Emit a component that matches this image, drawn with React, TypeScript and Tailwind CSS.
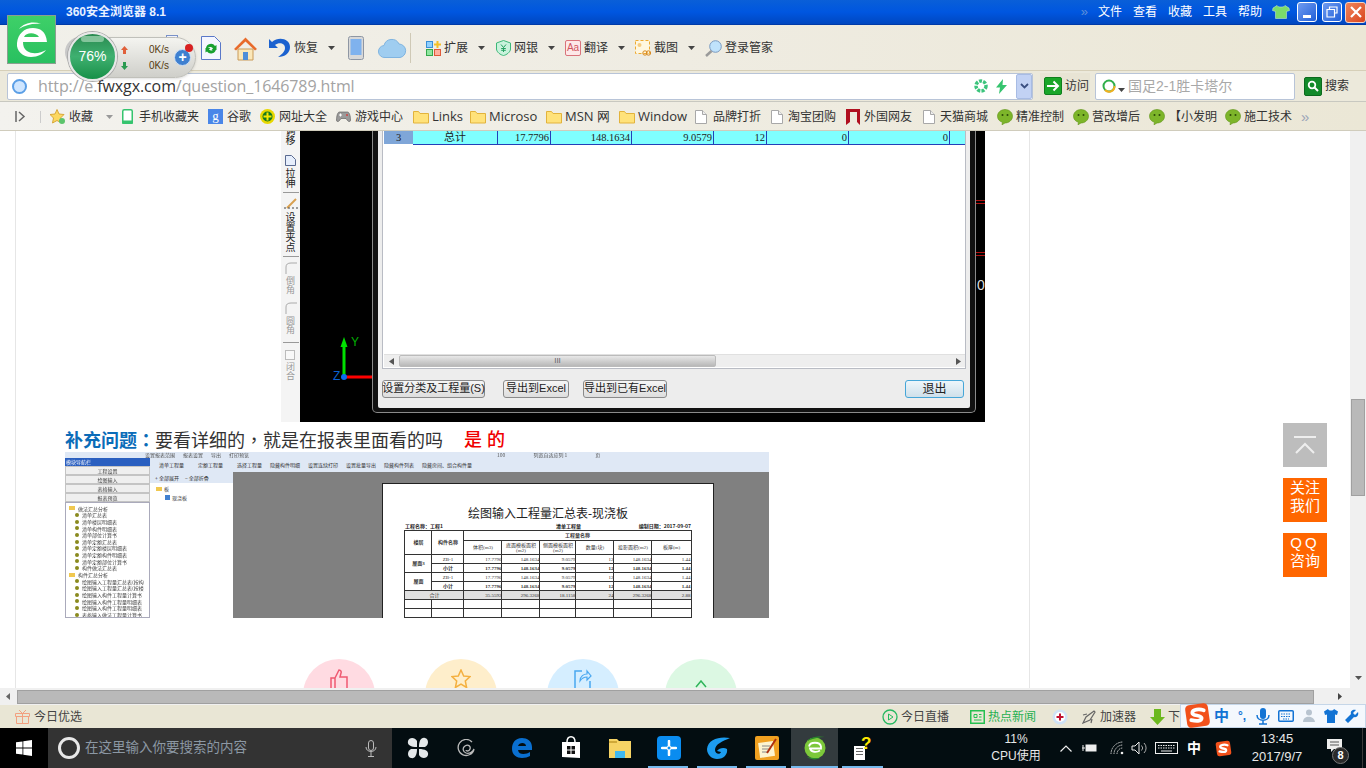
import React from "react";

const Caret = () => (
  <svg width="7" height="4" viewBox="0 0 7 4" className="shrink-0">
    <path d="M0 0h7L3.5 4z" fill="#444" />
  </svg>
);

const Folder = () => (
  <svg width="16" height="14" viewBox="0 0 16 14" className="shrink-0">
    <path d="M.5 13V1.5h5l1.5 2h8.500V13z" fill="#ffe27a" stroke="#e2b33c" />
  </svg>
);

const Doc = () => (
  <svg width="12" height="14" viewBox="0 0 12 14" className="shrink-0">
    <path d="M.5.5h7l4 4v9H.5z" fill="#fff" stroke="#a8a8a8" />
    <path d="M7.5.5v4h4" fill="#eee" stroke="#a8a8a8" />
  </svg>
);

const WeChat = () => (
  <svg width="16" height="16" viewBox="0 0 16 16" className="shrink-0">
    <path d="M8 .5c4 0 7.500 2.800 7.500 6.700S12 14 8 14l-3 1.800.4-2.500C2.300 12.300.5 10 .5 7.200.5 3.300 4 .5 8 .5z" fill="#7db52a" stroke="#5f9418" strokeWidth=".6" />
    <circle cx="5.500" cy="6" r="1" fill="#2c4a08" />
    <circle cx="10.500" cy="6" r="1" fill="#2c4a08" />
  </svg>
);

const ToolItem = ({ icon, label, caret, w }: { icon: React.ReactNode; label?: string; caret?: boolean; w: number }) => (
  <div className="flex items-center shrink-0 gap-[3px]" style={{ width: w }}>
    {icon}
    {label && <span className="text-[12px] text-[#333] whitespace-nowrap">{label}</span>}
    {caret && <span className="ml-[7px]"><Caret /></span>}
  </div>
);

const TitleBar = () => (
  <div className="h-[25px] shrink-0 flex items-center bg-gradient-to-b from-[#0a5fd8] via-[#0056e0] to-[#0047c0] border-b border-[#003aa8]">
    <span className="ml-[66px] text-[12px] font-bold text-[#e8f0ff]">360安全浏览器 8.1</span>
    <div className="ml-auto flex items-center text-white text-[12px]">
      <span className="text-[#5f8fd8] text-[13px] mr-[10px]">»</span>
      <div className="flex gap-[11px]">
        <span>文件</span>
        <span>查看</span>
        <span>收藏</span>
        <span>工具</span>
        <span>帮助</span>
      </div>
      <svg width="18" height="14" viewBox="0 0 18 14" className="ml-[10px] mr-[7px]">
        <path d="M5 .5 1 3l-.5 2.500 3 1V13.500h11V6.500l3-1L17 3 13 .5c-1 2-7 2-8 0z" fill="#7bdc6a" stroke="#d8f5d0" strokeWidth=".5" />
      </svg>
      <div className="w-[20px] h-[20px] rounded-[3px] border border-white bg-gradient-to-br from-[#6f9bf0] to-[#1f5fd8] flex items-end justify-center pb-[3px]">
        <div className="w-[8px] h-[3px] bg-white" />
      </div>
      <div className="w-[20px] h-[20px] ml-[5px] rounded-[3px] border border-white bg-gradient-to-br from-[#6f9bf0] to-[#1f5fd8] flex items-center justify-center">
        <svg width="12" height="12" viewBox="0 0 12 12">
          <path d="M3.500 3.500V1h7.500v6H8.500M1 3.500h7.500v7.500H1z" fill="none" stroke="#fff" strokeWidth="1.200" />
        </svg>
      </div>
      <div className="w-[21px] h-[21px] ml-[3px] rounded-[3px] border border-[#f6d5c6] bg-gradient-to-br from-[#f0845a] to-[#d9431a] flex items-center justify-center">
        <svg width="12" height="12" viewBox="0 0 12 12">
          <path d="M1 1l10 10M11 1 1 11" stroke="#fff" strokeWidth="2.200" />
        </svg>
      </div>
    </div>
  </div>
);

const Toolbar = () => (
  <div className="h-[46px] shrink-0 flex items-center pl-[201px] pt-[1px] bg-gradient-to-r from-[#f1f0ea] via-[#efece2] to-[#ebe7d6] border-b border-[#d6cfb8]">
    <div className="w-[32px] shrink-0">
      <svg width="20" height="24" viewBox="0 0 20 24">
        <path d="M.5.500h13l6 6V23.500H.5z" fill="#f4f6ff" stroke="#5a78c8" />
        <path d="M5 12a5 5 0 0 1 9-2l1.500-1v5h-5l1.500-1.500A3 3 0 0 0 7 12zM15 13a5 5 0 0 1-9 2.500l-1.500 1v-4.500h5L8 13.500A3 3 0 0 0 13 13z" fill="#18a030" />
      </svg>
    </div>
    <div className="w-[35px] shrink-0">
      <svg width="25" height="25" viewBox="0 0 25 25">
        <path d="M5 13v11h15V13z" fill="#fbe7b8" stroke="#c99a58" />
        <path d="M1 13 12.500 1.500 24 13l-2 1.500-9.500-9-9.500 9z" fill="#e86b2b" />
        <rect x="10" y="16" width="5" height="8" fill="#4f8ed8" />
      </svg>
    </div>
    <ToolItem
      w={80}
      label="恢复"
      caret
      icon={
        <svg width="23" height="24" viewBox="0 0 23 24" className="shrink-0">
          <path d="M1 3v9h9L7 9c4-3 10-2 10 3 0 4-4 7-7 9 7 0 12-4 12-10C22 3 11 0 4 6z" fill="#1c62cf" />
        </svg>
      }
    />
    <div className="w-[30px] shrink-0">
      <svg width="16" height="24" viewBox="0 0 16 24">
        <rect x=".5" y=".5" width="15" height="23" rx="2" fill="#d8d8d8" stroke="#8e96a3" />
        <rect x="2.500" y="3" width="11" height="16" fill="#7fb2ee" />
      </svg>
    </div>
    <div className="w-[32px] shrink-0">
      <svg width="29" height="20" viewBox="0 0 29 20">
        <path d="M7 19.500a6 6 0 0 1-1-12A8 8 0 0 1 21 6a6.800 6.800 0 0 1 1 13.500z" fill="#9fcdf0" stroke="#7fb4e0" />
      </svg>
    </div>
    <div className="w-px h-[30px] bg-[#cfc9b6] mr-[15px] shrink-0" />
    <ToolItem
      w={70}
      label="扩展"
      caret
      icon={
        <svg width="15" height="15" viewBox="0 0 15 15" className="shrink-0">
          <rect x=".5" y=".5" width="6" height="6" fill="#8fd0ff" stroke="#3a8fd8" />
          <rect x=".5" y="8.500" width="6" height="6" fill="#8fe6a0" stroke="#35a84c" />
          <rect x="8.500" y="8.500" width="6" height="6" fill="#ffb0a0" stroke="#e05a3a" />
          <path d="M10.500 0h2v2.500H15v2h-2.500V7h-2V4.500H8v-2h2.500z" fill="#f6c026" />
        </svg>
      }
    />
    <ToolItem
      w={69}
      label="网银"
      caret
      icon={
        <svg width="15" height="16" viewBox="0 0 15 16" className="shrink-0">
          <path d="M7.500.5 14.500 3v6c0 3-4 6-7 6.500C4.500 15 .5 12 .5 9V3z" fill="#c9f2dc" stroke="#3cb878" />
          <path d="M5 4.500l2.500 3 2.500-3M7.500 7.500V12M5.200 8.500h4.600M5.200 10.300h4.600" fill="none" stroke="#25a060" />
        </svg>
      }
    />
    <ToolItem
      w={70}
      label="翻译"
      caret
      icon={
        <div className="w-[16px] h-[16px] border border-[#d9737b] bg-[#fde8e8] rounded-[2px] text-[#d0565f] text-[10px] leading-[14px] text-center">Aa</div>
      }
    />
    <ToolItem
      w={70}
      label="截图"
      caret
      icon={
        <svg width="16" height="16" viewBox="0 0 16 16" className="shrink-0">
          <rect x=".5" y=".5" width="14" height="13" fill="#fff7e0" stroke="#eeaa30" strokeDasharray="3 2" />
          <circle cx="4.500" cy="5" r="2" fill="#f6cc80" />
          <circle cx="10" cy="13" r="2.200" fill="none" stroke="#d98a20" />
          <circle cx="13.500" cy="13" r="2.200" fill="none" stroke="#d98a20" />
        </svg>
      }
    />
    <ToolItem
      w={80}
      label="登录管家"
      icon={
        <svg width="17" height="17" viewBox="0 0 17 17" className="shrink-0">
          <circle cx="10.500" cy="6.500" r="5.800" fill="#bfe2fb" stroke="#7a9ac0" />
          <path d="M6.500 11 1 16" stroke="#9a9a9a" strokeWidth="2.500" />
        </svg>
      }
    />
  </div>
);

const AddressBar = () => (
  <div className="h-[31px] shrink-0 flex items-center pl-[7px] bg-[#ece9db] border-b border-[#c8c8c0]">
    <div className="w-[1026px] h-[27px] shrink-0 flex items-center bg-white border border-[#b8c4d8] rounded-[2px] pl-[4px]">
      <div className="w-[15px] h-[15px] rounded-full bg-[#cfe6ff] border-[2px] border-[#5b9fe6] shrink-0" />
      <span className="ml-[11px] text-[16px] text-[#a3a3a3] tracking-[-0.1px] [font-family:'Open_Sans',sans-serif] whitespace-nowrap">
        http://e.<span className="text-[#333]">fwxgx.com</span>/question_1646789.html
      </span>
      <div className="ml-auto flex items-center">
        <svg width="14" height="14" viewBox="0 0 14 14" className="mr-[8px]">
          <circle cx="7" cy="7" r="5" fill="none" stroke="#3cc47c" strokeWidth="3.500" strokeDasharray="3 1.200" />
        </svg>
        <svg width="11" height="15" viewBox="0 0 11 15" className="mr-[9px]">
          <path d="M7 0 0 8.500h4L3 15l8-9H6.500z" fill="#35c46e" />
        </svg>
        <div className="w-[16px] h-[25px] bg-[#c2d2f4] border border-[#a8bce4] rounded-[2px] flex items-center justify-center">
          <svg width="9" height="6" viewBox="0 0 9 6">
            <path d="M1 1l3.500 3.500L8 1" fill="none" stroke="#3a4f80" strokeWidth="1.800" />
          </svg>
        </div>
      </div>
    </div>
    <div className="w-[50px] h-[27px] ml-[7px] shrink-0 flex items-center gap-[3px] pl-[4px] bg-[#e8e4d4]">
      <div className="w-[18px] h-[18px] shrink-0 bg-[#1aa628] border border-[#0f7f1c] rounded-[2px] flex items-center justify-center">
        <svg width="13" height="12" viewBox="0 0 13 12">
          <path d="M0 6h10M6.500 1.500 11 6l-4.500 4.500" fill="none" stroke="#fff" strokeWidth="2" />
        </svg>
      </div>
      <span className="text-[12px] text-[#333] whitespace-nowrap">访问</span>
    </div>
    <div className="w-[200px] h-[27px] ml-[5px] shrink-0 flex items-center bg-white border border-[#b8c4d8] rounded-[2px] pl-[6px]">
      <svg width="15" height="15" viewBox="0 0 15 15" className="shrink-0">
        <circle cx="7" cy="7" r="5.500" fill="none" stroke="#2fae4a" strokeWidth="2" />
        <path d="M12.500 7A5.500 5.500 0 0 1 3 11" fill="none" stroke="#f2b01e" strokeWidth="2" />
      </svg>
      <span className="ml-[1px] mt-[7px]"><Caret /></span>
      <span className="ml-[3px] text-[14px] text-[#a8a8a8] whitespace-nowrap">国足2-1胜卡塔尔</span>
    </div>
    <div className="ml-[9px] shrink-0 flex items-center gap-[3px]">
      <div className="w-[18px] h-[19px] bg-[#138a2a] border border-[#0c6a1e] rounded-[2px] flex items-center justify-center">
        <svg width="12" height="12" viewBox="0 0 12 12">
          <circle cx="5" cy="5" r="3.300" fill="none" stroke="#fff" strokeWidth="1.800" />
          <path d="M7.500 7.500 11 11" stroke="#fff" strokeWidth="2" />
        </svg>
      </div>
      <span className="text-[12px] text-[#333]">搜索</span>
    </div>
  </div>
);

const Bm = ({ icon, label, w, gap = 4, latin }: { icon: React.ReactNode; label: string; w: number; gap?: number; latin?: boolean }) => (
  <div className="flex items-center shrink-0" style={{ width: w, gap }}>
    {icon}
    <span className={latin ? "text-[13px] text-[#333] whitespace-nowrap [font-family:'Open_Sans',sans-serif]" : "text-[12px] text-[#333] whitespace-nowrap"}>{label}</span>
  </div>
);

const BookmarkBar = () => (
  <div className="h-[29px] shrink-0 flex items-center pl-[15px] pt-[1px] bg-gradient-to-r from-[#f3f2ee] to-[#ebe7d6] border-b border-[#d0ccbc]">
    <svg width="12" height="11" viewBox="0 0 12 11" className="shrink-0">
      <path d="M1 0v11M4 1l5 4.500L4 10" fill="none" stroke="#666" strokeWidth="1.500" />
    </svg>
    <div className="w-px h-[12px] bg-[#ccc] ml-[13px] mr-[9px] shrink-0" />
    <div className="w-[72px] shrink-0 flex items-center gap-[4px]">
      <svg width="15" height="15" viewBox="0 0 15 15" className="shrink-0">
        <path d="M7 .5 9 5l5 .5-3.500 3.500 1 5L7 11.500 2.500 14l1-5L0 5.500 5 5z" fill="#fcd860" stroke="#d8a838" />
        <circle cx="12" cy="12" r="3" fill="#5cc46c" />
      </svg>
      <span className="text-[12px] text-[#333]">收藏</span>
      <span className="ml-[9px]"><svg width="7" height="4" viewBox="0 0 7 4"><path d="M0 0h7L3.500 4z" fill="#999" /></svg></span>
    </div>
    <Bm
      w={86}
      gap={6}
      label="手机收藏夹"
      icon={
        <svg width="11" height="15" viewBox="0 0 11 15" className="shrink-0">
          <rect x=".75" y=".75" width="9.500" height="13.500" rx="1.500" fill="#fff" stroke="#35c46e" strokeWidth="1.500" />
          <rect x="0" y="11.500" width="11" height="3.500" rx="1" fill="#35c46e" />
        </svg>
      }
    />
    <Bm
      w={52}
      label="谷歌"
      icon={<div className="w-[15px] h-[15px] shrink-0 bg-[#4a86e8] text-white text-[13px] leading-[13px] text-center [font-family:'Liberation_Serif',serif]">g</div>}
    />
    <Bm
      w={76}
      label="网址大全"
      icon={
        <svg width="15" height="15" viewBox="0 0 15 15" className="shrink-0">
          <circle cx="7.500" cy="7.500" r="7.500" fill="#e8d800" />
          <circle cx="7.500" cy="7.500" r="5" fill="#157a1e" />
          <path d="M6.500 3.500h2v3h3v2h-3v3h-2v-3h-3v-2h3z" fill="#f6e800" />
        </svg>
      }
    />
    <Bm
      w={77}
      label="游戏中心"
      icon={
        <svg width="15" height="11" viewBox="0 0 15 11" className="shrink-0">
          <path d="M3.500 1h8c2 0 3 4.500 3 8 0 2-2 2-3 .5L10 7.500H5L3.500 9.500c-1 1.500-3 1.500-3-.5 0-3.500 1-8 3-8z" fill="#9a9a9a" stroke="#555" strokeWidth=".6" />
          <circle cx="11" cy="4" r="1" fill="#d04040" />
          <path d="M3 4h3M4.500 2.500v3" stroke="#fff" />
        </svg>
      }
    />
    <Bm w={57} gap={3} latin label="Links" icon={<Folder />} />
    <Bm w={76} gap={3} latin label="Microso" icon={<Folder />} />
    <Bm w={73} gap={3} latin label="MSN 网" icon={<Folder />} />
    <Bm w={76} gap={3} latin label="Window" icon={<Folder />} />
    <Bm w={76} gap={6} label="品牌打折" icon={<Doc />} />
    <Bm w={75} gap={5} label="淘宝团购" icon={<Doc />} />
    <Bm
      w={77}
      label="外国网友"
      icon={
        <svg width="14" height="16" viewBox="0 0 14 16" className="shrink-0">
          <path d="M0 0h14v16l-3-3V3H4v10l-4 3z" fill="#b01020" />
        </svg>
      }
    />
    <Bm w={74} gap={5} label="天猫商城" icon={<Doc />} />
    <Bm w={76} gap={3} label="精准控制" icon={<WeChat />} />
    <Bm w={76} gap={3} label="营改增后" icon={<WeChat />} />
    <Bm w={76} gap={4} label="【小发明" icon={<WeChat />} />
    <Bm w={76} gap={3} label="施工技术" icon={<WeChat />} />
    <span className="text-[#9aa4b8] text-[15px] leading-none">»</span>
  </div>
);

const CadTool = ({ text, dim, icon }: { text: string[]; dim?: boolean; icon?: React.ReactNode }) => (
  <div className="flex flex-col items-center">
    {icon}
    <div className={dim ? "flex flex-col items-center text-[#999] text-[9px] leading-[9px] mt-[3px]" : "flex flex-col items-center text-[#222] text-[10px] leading-[10px] mt-[3px]"}>
      {text.map((t) => (
        <span key={t}>{t}</span>
      ))}
    </div>
  </div>
);

const CornerIcon = () => (
  <svg width="12" height="12" viewBox="0 0 12 12">
    <path d="M1 12V5Q1 1 6 1h6" fill="none" stroke="#aaa" />
  </svg>
);

const Divider = () => <div className="w-[16px] h-px shrink-0 bg-[#999] mt-[3px] mb-[5px]" />;

const colEdges = [85, 53, 81, 82, 53, 82, 101];
const totals = ["总计", "17.7796", "148.1634", "9.0579", "12", "0", "0"];

const CadDialog = () => (
  <div className="absolute left-[72px] top-[-6px] w-[604px] h-[288px] bg-[#111] border border-t-0 border-[#8a8a8a] rounded-b-[5px] px-[5px] pb-[4px]">
    <div className="h-full bg-[#ededed] flex flex-col px-[4px] rounded-b-[2px]">
      <div className="h-[244px] shrink-0 bg-white border border-[#b9bcc4] flex flex-col pl-[1px] pt-[5px]">
        <div className="h-[14px] flex shrink-0 [font-family:'Liberation_Serif','Noto_Sans_CJK_SC',serif] text-[10.500px] leading-[13px] text-[#222]">
          <div className="w-[29px] h-[13px] bg-[#7fa6d8] text-center shrink-0">3</div>
          <div className="flex flex-1 bg-[#7fffff] border-b-[1.500px] border-[#2440b8]">
            {totals.map((t, i) => (
              <div
                key={t + i}
                style={{ width: colEdges[i] }}
                className={i === 0 ? "text-center border-r border-[#2440b8] shrink-0 text-[11px]" : "text-right pr-[1px] border-r border-[#2440b8] shrink-0"}
              >
                {t}
              </div>
            ))}
          </div>
        </div>
        <div className="flex-1" />
        <div className="h-[13px] shrink-0 bg-[#eeeeee] flex items-center border-t border-[#e0e0e0] mb-[1px]">
          <svg width="5" height="7" viewBox="0 0 5 7" className="ml-[5px]">
            <path d="M5 0v7L0 3.500z" fill="#555" />
          </svg>
          <div className="ml-[5px] w-[317px] h-[12px] bg-gradient-to-b from-[#e8e8e8] to-[#b8b8b8] border border-[#bbb] rounded-[2px] flex items-center justify-center text-[8px] leading-none text-[#666]">III</div>
          <svg width="5" height="7" viewBox="0 0 5 7" className="ml-auto mr-[4px]">
            <path d="M0 0v7l5-3.500z" fill="#555" />
          </svg>
        </div>
      </div>
      <div className="flex items-center flex-1 text-[11px] text-[#222]">
        <div className="w-[103px] h-[18px] flex items-center justify-center bg-gradient-to-b from-[#f6f6f6] to-[#dedede] border border-[#8a8a8a] rounded-[3px] whitespace-nowrap">设置分类及工程量(S)</div>
        <div className="w-[66px] h-[18px] ml-[18px] flex items-center justify-center bg-gradient-to-b from-[#f6f6f6] to-[#dedede] border border-[#8a8a8a] rounded-[3px] whitespace-nowrap">导出到Excel</div>
        <div className="w-[84px] h-[18px] ml-[14px] flex items-center justify-center bg-gradient-to-b from-[#f6f6f6] to-[#dedede] border border-[#8a8a8a] rounded-[3px] whitespace-nowrap">导出到已有Excel</div>
        <div className="w-[59px] h-[18px] ml-auto mr-[2px] flex items-center justify-center bg-gradient-to-b from-[#eef6fb] to-[#cfe0ea] border-[1.500px] border-[#46a6d8] rounded-[3px] text-[12px]">退出</div>
      </div>
    </div>
  </div>
);

const CadShot = () => (
  <div className="ml-[265px] w-[704px] h-[291px] shrink-0 flex overflow-hidden">
    <div className="w-[19px] shrink-0 bg-[#f4f4f4] flex flex-col items-center">
      <div className="-mt-[8px] shrink-0">
        <CadTool text={["调", "移"]} />
      </div>
      <div className="h-[9px] shrink-0" />
      <CadTool
        text={["拉", "伸"]}
        icon={
          <svg width="11" height="11" viewBox="0 0 11 11">
            <path d="M.5.500h6l4 4v6H.5z" fill="#e6eefc" stroke="#5a6a90" />
          </svg>
        }
      />
      <Divider />
      <CadTool
        text={["设", "置", "夹", "点"]}
        icon={
          <svg width="14" height="12" viewBox="0 0 14 12">
            <path d="M3 10 12 1" stroke="#d8a050" strokeWidth="2" />
            <path d="M0 10h14" stroke="#444" strokeDasharray="2 2" />
          </svg>
        }
      />
      <Divider />
      <CadTool dim text={["倒", "角"]} icon={<CornerIcon />} />
      <div className="h-[7px] shrink-0" />
      <CadTool dim text={["圆", "角"]} icon={<CornerIcon />} />
      <div className="h-[4px] shrink-0" />
      <Divider />
      <CadTool
        dim
        text={["闭", "合"]}
        icon={
          <svg width="12" height="12" viewBox="0 0 12 12">
            <rect x=".5" y="2.500" width="9" height="9" fill="#f8f8f8" stroke="#bbb" />
          </svg>
        }
      />
    </div>
    <div className="relative flex-1 bg-black">
      <svg width="48" height="50" viewBox="0 0 48 50" className="absolute left-[32px] top-[205px]">
        <path d="M45 41H12" stroke="#ff0000" strokeWidth="3" />
        <path d="M12 41V10" stroke="#00e000" strokeWidth="3" />
        <path d="M12 1l3.500 10h-7z" fill="#00e000" />
        <circle cx="12" cy="41" r="3" fill="#0a6cf0" />
      </svg>
      <span className="absolute left-[51px] top-[204px] text-[12px] leading-[14px] text-[#00b000]">Y</span>
      <span className="absolute left-[33px] top-[238px] text-[12px] leading-[14px] text-[#0a60d0]">Z</span>
      <CadDialog />
      <div className="absolute left-[676px] top-[69px] w-[9px] h-[1px] bg-[#b01010]" />
      <div className="absolute left-[676px] top-[72px] w-[9px] h-[1px] bg-[#b01010]" />
      <div className="absolute left-[676px] top-[121px] w-[9px] h-[1px] bg-[#b01010]" />
      <div className="absolute left-[676px] top-[124px] w-[9px] h-[1px] bg-[#b01010]" />
      <span className="absolute left-[677px] top-[146px] text-[14px] leading-[16px] text-[#ddd]">0</span>
    </div>
  </div>
);

const tree1 = ["清单汇总表", "清单楼层明细表", "清单构件明细表", "清单部位计算书", "清单定额汇总表", "清单定额楼层明细表", "清单定额构件明细表", "清单定额部位计算书", "构件做法汇总表"];
const tree2 = ["绘图输入工程量汇总表(按构", "绘图输入工程量汇总表(按楼", "绘图输入构件工程量计算书", "绘图输入构件工程量明细表", "绘图输入构件工程量明细表", "表格输入做法工程量计算书"];

const TreeRow = ({ t }: { t: string }) => (
  <div className="flex items-center gap-[3px] pl-[9px] h-[6.650px] whitespace-nowrap">
    <div className="w-[4px] h-[4px] rounded-full bg-[#8a8a1e] shrink-0" />
    <span>{t}</span>
  </div>
);

const TreeHead = ({ t }: { t: string }) => (
  <div className="flex items-center gap-[3px] pl-[3px] h-[6.650px]">
    <div className="w-[6px] h-[4px] bg-[#f0c850] shrink-0" />
    <span>{t}</span>
  </div>
);

const Navs = ["工程设置", "绘图输入", "表格输入", "报表预览"];
const cols = [27, 32, 38, 38, 36, 38, 38, 39];
const heads = ["体积(m3)", "底面模板面积(m2)", "侧面模板面积(m2)", "数量(块)", "投影面积(m2)", "板厚(m)"];
const rows = [
  { floor: "屋面3", name: "ZB-1", v: ["17.7796", "148.1634", "9.0579", "12", "148.1634", "1.44"] },
  { floor: "", name: "小计", bold: true, v: ["17.7796", "148.1634", "9.0579", "12", "148.1634", "1.44"] },
  { floor: "屋面", name: "ZB-1", v: ["17.7796", "148.1634", "9.0579", "12", "148.1634", "1.44"] },
  { floor: "", name: "小计", bold: true, v: ["17.7796", "148.1634", "9.0579", "12", "148.1634", "1.44"] },
];

const ReportTable = () => (
  <table className="w-[286px] table-fixed border-collapse border border-[#333] text-[5px] leading-[5px] text-[#333] [font-family:'Liberation_Serif','Noto_Sans_CJK_SC',serif]">
    <colgroup>
      {cols.map((w, i) => (
        <col key={i} style={{ width: w }} />
      ))}
    </colgroup>
    <tbody>
      <tr className="h-[10px]">
        <td rowSpan={2} className="border border-[#333] text-center font-bold">楼层</td>
        <td rowSpan={2} className="border border-[#333] text-center font-bold">构件名称</td>
        <td colSpan={6} className="border border-[#333] text-center font-bold">工程量名称</td>
      </tr>
      <tr className="h-[14px]">
        {heads.map((h) => (
          <td key={h} className="border border-[#333] text-center overflow-hidden">{h}</td>
        ))}
      </tr>
      {rows.map((r, i) => (
        <tr key={i} className={r.bold ? "h-[9px] font-bold" : "h-[9px]"}>
          {r.floor !== "" && <td rowSpan={2} className="border border-[#333] text-center font-bold">{r.floor}</td>}
          <td className="border border-[#333] text-center">{r.name}</td>
          {r.v.map((v, j) => (
            <td key={j} className="border border-[#333] text-right">{v}</td>
          ))}
        </tr>
      ))}
      <tr className="h-[9px] bg-[#e0e0e0]">
        <td colSpan={2} className="border border-[#333] text-center">合计</td>
        {["35.5592", "296.3268", "18.1158", "24", "296.3268", "2.88"].map((v) => (
          <td key={v} className="border border-[#333] text-right">{v}</td>
        ))}
      </tr>
      {[0, 1, 2].map((i) => (
        <tr key={i} className="h-[9px]">
          {cols.map((_, j) => (
            <td key={j} className="border border-[#333]" />
          ))}
        </tr>
      ))}
    </tbody>
  </table>
);

const ReportShot = () => (
  <div className="ml-[49px] w-[704px] h-[166px] shrink-0 flex flex-col overflow-hidden blur-[0.35px] [font-family:'Noto_Sans_CJK_SC',sans-serif]">
    <div className="h-[6px] shrink-0 bg-[#dfe8f5] flex items-center text-[5px] text-[#555] gap-[8px] pl-[10px] whitespace-nowrap">
      <span className="ml-[70px]">设置报表范围</span>
      <span>报表设置</span>
      <span>导出</span>
      <span>打印预览</span>
      <span className="ml-[240px]">100</span>
      <span className="ml-[20px]">列宽自适应列 1</span>
      <span className="ml-[20px]">页</span>
    </div>
    <div className="flex flex-1 min-h-0">
      <div className="w-[85px] shrink-0 bg-[#e8eef8] flex flex-col text-[5px] text-[#444]">
        <div className="h-[8px] bg-[#2a5fc0] text-white leading-[8px] pl-[1px] shrink-0">模块导航栏</div>
        {Navs.map((n) => (
          <div key={n} className="h-[9px] shrink-0 bg-[#efefef] border border-[#c4c4c4] text-center leading-[7px]">{n}</div>
        ))}
        <div className="flex-1 bg-white border border-[#aab] pt-[2px] overflow-hidden">
          <TreeHead t="做法汇总分析" />
          {tree1.map((t) => (
            <TreeRow key={t} t={t} />
          ))}
          <TreeHead t="构件汇总分析" />
          {tree2.map((t) => (
            <TreeRow key={t} t={t} />
          ))}
        </div>
      </div>
      <div className="flex-1 min-w-0 flex flex-col">
        <div className="h-[14px] shrink-0 bg-[#dfe8f5] flex items-center text-[5px] text-[#333] whitespace-nowrap pl-[3px] gap-[8px]">
          <span className="ml-[6px]">清单工程量</span>
          <span className="ml-[6px]">定额工程量</span>
          <span className="ml-[6px]">选择工程量</span>
          <span>隐藏构件明细</span>
          <span>设置连续打印</span>
          <span>设置批量导出</span>
          <span>隐藏构件列表</span>
          <span>隐藏房间、组合构件量</span>
        </div>
        <div className="flex flex-1 min-h-0">
          <div className="w-[83px] shrink-0 bg-white flex flex-col text-[5px] text-[#333]">
            <div className="h-[11px] bg-[#dfe8f5] flex items-center gap-[6px] pl-[5px] shrink-0">
              <span>+ 全部展开</span>
              <span>− 全部折叠</span>
            </div>
            <div className="pl-[6px] pt-[2px]">
              <div className="flex items-center gap-[2px]"><div className="w-[6px] h-[4px] bg-[#f0c850]" />板</div>
              <div className="flex items-center gap-[2px] pl-[9px] mt-[1px]"><div className="w-[5px] h-[5px] bg-[#4080d0]" />现浇板</div>
            </div>
          </div>
          <div className="flex-1 min-w-0 bg-[#808080] pl-[149px] pt-[11px]">
            <div className="w-[332px] h-[200px] bg-white border-t border-x border-[#222] flex flex-col items-center pt-[22px]">
              <div className="text-[12px] leading-[16px] text-[#222] font-normal [font-family:'Liberation_Serif','Noto_Sans_CJK_SC',serif] whitespace-nowrap">绘图输入工程量汇总表-现浇板</div>
              <div className="w-[286px] flex text-[5px] leading-[8px] font-bold text-[#222] whitespace-nowrap">
                <span>工程名称：工程1</span>
                <span className="ml-[113px]">清单工程量</span>
                <span className="ml-auto">编制日期：2017-09-07</span>
              </div>
              <ReportTable />
            </div>
          </div>
        </div>
      </div>
    </div>
  </div>
);

const Circle = ({ bg, className, children }: { bg: string; className?: string; children: React.ReactNode }) => (
  <div className={`w-[72px] h-[72px] rounded-full flex justify-center pt-[10px] shrink-0 ${bg} ${className ?? ""}`}>{children}</div>
);

const Content = () => (
  <div className="h-[557px] shrink-0 flex">
    <div className="flex-1 min-w-0 overflow-hidden bg-white relative">
      <div className="ml-[15px] w-[1015px] h-full border-x border-[#e6e6e6] bg-white flex flex-col">
        <CadShot />
        <div className="h-[30px] shrink-0 ml-[49px] pt-[6px] flex items-center text-[18px] whitespace-nowrap">
          <span className="font-bold text-[#0b6cb8]">补充问题<span className="[font-family:'Noto_Sans_CJK_TC',sans-serif]">：</span></span>
          <span className="text-[#333]">要看详细的<span className="[font-family:'Noto_Sans_CJK_TC',sans-serif]">，</span>就是在报表里面看的吗</span>
          <span className="ml-[21px] text-[#f00000] font-medium">是 的</span>
        </div>
        <ReportShot />
        <div className="ml-[287px] mt-[41px] flex gap-[50px] shrink-0">
          <Circle bg="bg-[#ffdbe2]">
            <svg width="18" height="20" viewBox="0 0 18 20">
              <path d="M1 9h4v11H1zM5 9l4-8c2 0 2.500 2 2 3l-1 4h7v12H5" fill="none" stroke="#ef5a72" strokeWidth="1.500" />
            </svg>
          </Circle>
          <Circle bg="bg-[#feeecb]">
            <svg width="20" height="20" viewBox="0 0 20 20">
              <path d="M10 1l2.700 6 6.300.6-4.700 4.400 1.300 6.500-5.600-3.300-5.600 3.300L5.700 12 1 7.600 7.300 7z" fill="none" stroke="#f4b040" strokeWidth="1.500" />
            </svg>
          </Circle>
          <Circle bg="bg-[#d5eeff]">
            <svg width="18" height="20" viewBox="0 0 18 20">
              <path d="M8 2H1v18h15v-8" fill="none" stroke="#4aa8f0" strokeWidth="1.500" />
              <path d="M6 12c0-5 4-7 7-7V2l4 5-4 4V8c-3 0-5 1-7 4z" fill="none" stroke="#4aa8f0" strokeWidth="1.200" />
            </svg>
          </Circle>
          <Circle bg="bg-[#dcf8e3]" className="-ml-[4px]">
            <svg width="12" height="20" viewBox="0 0 12 20" className="mt-[11px]">
              <path d="M1 7l5-6 5 6" fill="none" stroke="#2fb45a" strokeWidth="1.500" />
            </svg>
          </Circle>
        </div>
      </div>
      <div className="absolute left-[1283px] top-[292px] w-[44px] flex flex-col gap-[11px]">
        <div className="h-[44px] bg-[#bdbdbd] flex items-center justify-center">
          <svg width="24" height="20" viewBox="0 0 24 20">
            <path d="M1 2h22M3 18 12 9l9 9" fill="none" stroke="#eee" strokeWidth="2" />
          </svg>
        </div>
        <div className="h-[44px] pb-[6px] bg-[#ff6600] text-white text-[15px] leading-[18px] flex flex-col items-center justify-center">
          <span>关注</span>
          <span>我们</span>
        </div>
        <div className="h-[44px] pb-[6px] bg-[#ff6600] text-white text-[15px] leading-[18px] flex flex-col items-center justify-center">
          <span className="tracking-[3px]">QQ</span>
          <span>咨询</span>
        </div>
      </div>
    </div>
    <div className="w-[16px] shrink-0 bg-[#f0f0f0] flex flex-col items-center">
      <div className="w-[14px] h-[97px] mt-[268px] bg-[#b9b9b9] border border-[#a0a0a0]" />
      <svg width="7" height="4" viewBox="0 0 7 4" className="mt-auto mb-[8px]">
        <path d="M0 0h7L3.500 4z" fill="#555" />
      </svg>
    </div>
  </div>
);

const HScroll = () => (
  <div className="h-[17px] shrink-0 bg-[#f0f0f0] flex items-center">
    <svg width="4" height="7" viewBox="0 0 4 7" className="ml-[6px] shrink-0">
      <path d="M4 0v7L0 3.500z" fill="#666" />
    </svg>
    <div className="w-[1297px] h-[14px] ml-[7px] bg-[#b9b9b9] border border-[#a0a0a0] shrink-0" />
    <svg width="4" height="7" viewBox="0 0 4 7" className="ml-[24px] shrink-0">
      <path d="M0 0v7l4-3.500z" fill="#444" />
    </svg>
  </div>
);

const StatusBar = () => (
  <div className="h-[23px] shrink-0 flex items-center bg-[#e9e6d5] text-[12px] text-[#444] pl-[15px] whitespace-nowrap">
    <svg width="15" height="15" viewBox="0 0 15 15" className="shrink-0">
      <path d="M.5 4.500h14v3H.5zM1.500 7.500v7h12v-7M7.500 4.500v10M4 1l3.500 3.500L11 1" fill="none" stroke="#f2a080" />
    </svg>
    <span className="ml-[4px]">今日优选</span>
    <div className="ml-[800px] flex items-center gap-[3px]">
      <svg width="16" height="16" viewBox="0 0 16 16">
        <circle cx="8" cy="8" r="7" fill="none" stroke="#25b860" strokeWidth="1.300" />
        <path d="M6.500 5v6L11 8z" fill="none" stroke="#25b860" />
      </svg>
      <span className="w-[49px]">今日直播</span>
    </div>
    <div className="ml-[20px] flex items-center gap-[3px]">
      <svg width="15" height="14" viewBox="0 0 15 14">
        <rect x=".75" y=".75" width="13.500" height="12.500" fill="none" stroke="#25c050" strokeWidth="1.500" />
        <path d="M4 4.500h3v3H4zM9 4.500h2.500M9 7h2.500M4 10h7.500" fill="none" stroke="#25c050" />
      </svg>
      <span className="w-[48px] text-[#25b050]">热点新闻</span>
    </div>
    <svg width="16" height="16" viewBox="0 0 16 16" className="ml-[16px] shrink-0">
      <circle cx="8" cy="8" r="7.500" fill="#cfe2f6" />
      <circle cx="8" cy="8" r="5" fill="#fff" />
      <path d="M7 4.500h2v2.500h2.500v2H9v2.500H7V9H4.500V7H7z" fill="#c01030" />
    </svg>
    <svg width="14" height="14" viewBox="0 0 14 14" className="ml-[14px] shrink-0">
      <path d="M1 13l3-6L12 1l1 1-5 8zM1 5l4-1M9 13l1-4" fill="none" stroke="#666" strokeWidth="1.200" />
    </svg>
    <span className="ml-[4px]">加速器</span>
    <svg width="15" height="16" viewBox="0 0 15 16" className="ml-[14px] shrink-0">
      <path d="M4 0h7v8h4l-7.500 8L0 8h4z" fill="#6cb81e" />
    </svg>
    <span className="ml-[3px]">下载</span>
  </div>
);

const SogouLogo = ({ size }: { size: number }) => (
  <svg width={size} height={size} viewBox="0 0 26 26">
    <rect x="2" y="2" width="22" height="22" rx="4" fill="#f2511b" transform="rotate(-8 13 13)" />
    <path d="M19 8c-4-1.500-11-1-11 2.500s9 1.500 9 5-6 3-10 2" fill="none" stroke="#fff" strokeWidth="3.600" strokeLinecap="round" />
  </svg>
);

const SogouBar = () => (
  <div className="absolute left-[1180px] top-[704px] w-[186px] h-[24px] bg-[#f4f8fd] border border-[#c5d6e8] flex items-center">
    <div className="absolute left-[3px] top-[-3px]"><SogouLogo size={27} /></div>
    <span className="ml-[33px] text-[15px] font-bold text-[#1273d4]">中</span>
    <span className="ml-[9px] text-[12px] font-bold text-[#1273d4] leading-none">°,</span>
    <svg width="14" height="17" viewBox="0 0 14 17" className="ml-[10px]">
      <rect x="4" y="0" width="6" height="11" rx="3" fill="#1273d4" />
      <path d="M1 7c0 7 12 7 12 0M7 12v4M3 16h8" fill="none" stroke="#1273d4" strokeWidth="1.500" />
    </svg>
    <svg width="16" height="12" viewBox="0 0 16 12" className="ml-[8px]">
      <rect x=".75" y=".75" width="14.500" height="10.500" rx="1" fill="none" stroke="#1273d4" strokeWidth="1.500" />
      <path d="M3 4h10M3 6.500h10M5 9h6" stroke="#1273d4" strokeDasharray="1.500 1" />
    </svg>
    <svg width="16" height="14" viewBox="0 0 16 14" className="ml-[8px]">
      <circle cx="7" cy="3.500" r="3" fill="#b8c4d0" />
      <path d="M1 13c0-7 11-7 12 0z" fill="#b8c4d0" />
    </svg>
    <svg width="14" height="14" viewBox="0 0 14 14" className="ml-[6px]">
      <path d="M4 0 0 2.500l1 3.500 2-.5V14h8V5.500l2 .5 1-3.500L10 0c-1 2-5 2-6 0z" fill="#1273d4" />
    </svg>
    <svg width="14" height="14" viewBox="0 0 14 14" className="ml-[7px]">
      <path d="M13 3 10 6 8 4l3-3C8 0 5 2 6 5L0 11l3 3 6-6c3 1 5-2 4-5z" fill="#1273d4" />
    </svg>
  </div>
);

const TaskIcon = ({ w, mark, active, children }: { w: number; mark?: boolean; active?: boolean; children: React.ReactNode }) => (
  <div className={active ? "relative h-full flex items-center justify-center shrink-0 bg-[#333b3e]" : "relative h-full flex items-center justify-center shrink-0"} style={{ width: w }}>
    {children}
    {mark && <div className={active ? "absolute bottom-0 left-0 right-0 h-[2px] bg-[#76b9ed]" : "absolute bottom-0 left-[4px] right-[5px] h-[2px] bg-[#76b9ed]"} />}
  </div>
);

const Taskbar = () => (
  <div className="h-[40px] shrink-0 flex bg-[#030d11] text-white">
    <div className="w-[48px] h-full bg-black flex items-center justify-center shrink-0">
      <svg width="16" height="16" viewBox="0 0 16 16">
        <path d="M0 2.300 6.500 1.400v6.200H0zM7.300 1.300 16 0v7.600H7.300zM0 8.400h6.500v6.200L0 13.700zM7.300 8.400H16V16l-8.700-1.300z" fill="#fff" />
      </svg>
    </div>
    <div className="w-[344px] h-full bg-[#333333] flex items-center shrink-0 pl-[10px]">
      <div className="w-[22px] h-[22px] rounded-full border-[3px] border-[#e8e8e8] shrink-0" />
      <span className="ml-[5px] text-[13.500px] text-[#8c98a4] whitespace-nowrap">在这里输入你要搜索的内容</span>
      <svg width="12" height="17" viewBox="0 0 12 17" className="ml-auto mr-[15px]">
        <rect x="3.500" y=".5" width="5" height="10" rx="2.500" fill="none" stroke="#bbb" />
        <path d="M1 7c0 6 10 6 10 0M6 12v4M3 16.500h6" fill="none" stroke="#bbb" />
      </svg>
    </div>
    <div className="w-[2px]" />
    <TaskIcon w={48}>
      <svg width="22" height="22" viewBox="0 0 22 22">
        <path d="M10 10C4 10 0 8 1 4s7-4 9 0zM12 10c0-6 2-10 6-9s4 7 0 9zM12 12c6 0 10 2 9 6s-7 4-9 0zM10 12c0 6-2 10-6 9s-4-7 0-9z" fill="#e4e8ea" />
      </svg>
    </TaskIcon>
    <TaskIcon w={48}>
      <svg width="18" height="18" viewBox="0 0 18 18">
        <path d="M15 3A8 8 0 1 0 17 10c-1 3-5 5-8 4S5 9 8 7s6 0 5 3-4 2-4 1" fill="none" stroke="#bbb" strokeWidth="1.300" />
      </svg>
    </TaskIcon>
    <div className="w-[7px] shrink-0" />
    <TaskIcon w={49}>
      <svg width="20" height="20" viewBox="0 0 20 20">
        <path d="M10 0C3 0 0 5 0 11c0 6 5 9 10 9 3 0 6-1 8-2v-4c-3 2-11 4-12-2h14v-3C20 3 15 0 10 0zM6 8c1-4 8-4 8 0z" fill="#0a6fd0" />
      </svg>
    </TaskIcon>
    <TaskIcon w={49}>
      <svg width="20" height="24" viewBox="0 0 20 24">
        <path d="M1 6h18v16l-18-1z" fill="#fff" />
        <path d="M6 6c0-7 8-7 8 0" fill="none" stroke="#fff" strokeWidth="1.500" />
        <path d="M6 10h3.500v3.500H6zM10.500 10H14v3.500h-3.500zM6 14.500h3.500V18H6zM10.500 14.500H14V18h-3.500z" fill="#111" />
      </svg>
    </TaskIcon>
    <TaskIcon w={49}>
      <svg width="22" height="19" viewBox="0 0 22 19">
        <path d="M0 0h8l2 2h12v17H0z" fill="#f6d365" />
        <path d="M6 12h10v7H6z" fill="#40b8f0" />
        <path d="M0 2h8v2H0z" fill="#cfa838" />
      </svg>
    </TaskIcon>
    <TaskIcon w={49} mark>
      <div className="w-[24px] h-[24px] rounded-[4px] bg-[#0a8cf0] flex items-center justify-center">
        <svg width="16" height="16" viewBox="0 0 16 16">
          <path d="M8 1v14M1 8h14" stroke="#fff" strokeWidth="2.500" strokeLinecap="round" />
          <circle cx="8" cy="8" r="2" fill="#0a8cf0" stroke="#fff" />
        </svg>
      </div>
    </TaskIcon>
    <TaskIcon w={49} mark>
      <svg width="24" height="24" viewBox="0 0 24 24">
        <path d="M24 2C14 0 2 3 1 13c0 6 5 10 10 10 7 0 11-5 10-10-3-2-8-1-10 2l4 1c-1 3-6 2-6-2 0-6 8-9 15-12z" fill="#1c9cf0" />
      </svg>
    </TaskIcon>
    <TaskIcon w={49} mark>
      <svg width="24" height="24" viewBox="0 0 24 24">
        <rect x="0" y="0" width="24" height="24" rx="2" fill="#f0a020" />
        <rect x="4" y="6" width="15" height="15" fill="#fdf4d0" transform="rotate(-8 11 13)" />
        <path d="M7 10h8M7 13h8M7 16h6" stroke="#888" />
        <path d="M21 3 12 17" stroke="#b03010" strokeWidth="2" />
      </svg>
    </TaskIcon>
    <TaskIcon w={47} mark active>
      <svg width="22" height="24" viewBox="0 0 22 24">
        <circle cx="11" cy="12" r="10.500" fill="#7cc83a" />
        <path d="M5 10.500c1-5 11-5 12 0v2H6c1 4 7 4 10 2" fill="none" stroke="#fff" strokeWidth="1.800" />
        <path d="M3 5C8 0 16 0 21 1 15 1 8 3 3 5zM3 21c4 3 10 3 13 1-4 0-9 0-13-1z" fill="#2a8a2a" />
      </svg>
    </TaskIcon>
    <TaskIcon w={50} mark>
      <div className="relative w-[18px] h-[24px]">
        <div className="absolute left-0 bottom-0 w-[11px] h-[14px] bg-white flex flex-col gap-[2px] p-[2px]">
          <div className="h-px bg-[#666]" />
          <div className="h-px bg-[#666]" />
          <div className="h-px bg-[#666]" />
        </div>
        <span className="absolute left-[7px] top-[-2px] text-[#ffe800] text-[17px] leading-[20px] font-bold [font-family:'Liberation_Sans',sans-serif]">?</span>
      </div>
    </TaskIcon>
    <div className="w-[98px] shrink-0" />
    <div className="w-[60px] h-full flex flex-col items-center justify-center text-[12px] leading-[17px] text-[#e8e8e8] shrink-0">
      <span>11%</span>
      <span>CPU使用</span>
    </div>
    <div className="w-[20px] ml-[10px] h-full flex items-center justify-center shrink-0">
      <svg width="12" height="7" viewBox="0 0 12 7"><path d="M.5 6.500 6 1l5.500 5.500" fill="none" stroke="#eee" strokeWidth="1.200" /></svg>
    </div>
    <div className="w-[24px] ml-[2px] h-full flex items-center justify-center shrink-0">
      <svg width="16" height="11" viewBox="0 0 16 11">
        <rect x="3.500" y="1.500" width="11" height="7" fill="#eee" />
        <path d="M0 5h3M1 2v6" stroke="#eee" />
      </svg>
    </div>
    <div className="w-[26px] ml-[2px] h-full flex items-center justify-center shrink-0">
      <svg width="14" height="14" viewBox="0 0 14 14">
        <path d="M1 13A12 12 0 0 1 13 1M4 13A9 9 0 0 1 13 4M7 13a6 6 0 0 1 6-6" fill="none" stroke="#ccc" strokeDasharray="1.500 .8" />
        <circle cx="12" cy="12" r="1.300" fill="#eee" />
      </svg>
    </div>
    <div className="w-[17px] h-full flex items-center justify-center shrink-0">
      <svg width="16" height="14" viewBox="0 0 16 14">
        <path d="M1 5h3l4-4v12l-4-4H1z" fill="none" stroke="#eee" />
        <path d="M10.500 4.500a3.500 3.500 0 0 1 0 5M13 2a7 7 0 0 1 0 10" fill="none" stroke="#aaa" />
      </svg>
    </div>
    <div className="w-[26px] ml-[6px] h-full flex items-center justify-center shrink-0">
      <svg width="23" height="12" viewBox="0 0 23 12">
        <rect x=".5" y=".5" width="22" height="11" fill="none" stroke="#eee" />
        <path d="M3 3.500h17M3 6h17" stroke="#eee" strokeDasharray="1.500 1" />
        <path d="M6 9h11" stroke="#eee" />
      </svg>
    </div>
    <div className="w-[22px] ml-[4px] h-full flex items-center justify-center text-[14px] font-bold shrink-0">中</div>
    <div className="w-[24px] ml-[6px] h-full flex items-center justify-center shrink-0">
      <SogouLogo size={17} />
    </div>
    <div className="w-[62px] ml-[11px] h-full flex flex-col items-center justify-center text-[13px] leading-[18px] text-[#e8e8e8] shrink-0">
      <span>13:45</span>
      <span>2017/9/7</span>
    </div>
    <div className="w-[13px] shrink-0" />
    <div className="relative w-[26px] h-full flex items-center justify-center shrink-0">
      <svg width="15" height="14" viewBox="0 0 15 14" className="-mt-[4px]">
        <path d="M0 0h15v10H7l-3 3v-3H0z" fill="#eee" />
        <path d="M3 3h9M3 6h9" stroke="#555" />
      </svg>
      <div className="absolute left-[11px] top-[19px] w-[17px] h-[17px] rounded-full bg-[#2a2a2a] border border-[#777] text-[11px] leading-[15px] text-center font-bold">8</div>
    </div>
    <div className="w-px h-full bg-[#3a3a3a] ml-[15px] shrink-0" />
  </div>
);

const FloatLogo = () => (
  <>
    <div className="absolute left-[7px] top-[15px] w-[49px] h-[49px] bg-gradient-to-b from-[#3ed068] to-[#28c060] border border-[#8aa090] flex items-center justify-center">
      <svg width="38" height="38" viewBox="0 0 38 38">
        <path d="M10 21h24C33 10 27 7 20 7 11 7 5 13 4 22c-1 8 6 14 14 14 7 0 12-3 15-7-5 3-13 5-19 1-3-2-4-5-4-9z" fill="#fff" />
        <path d="M11 16c2-5 12-5 15 0z" fill="#35c960" />
        <path d="M6 8C11 2 20 0 28 3 20 2 12 4 6 8z" fill="#fff" />
      </svg>
    </div>
    <div className="absolute left-[65px] top-[37px] w-[30px] h-[30px] rounded-full bg-[#c8c8c8]" />
    <div className="absolute left-[166px] top-[35px] w-[12px] h-[20px] bg-[#f4f6ff] border border-[#7a92c8]" />
    <div className="absolute left-[92px] top-[37px] w-[104px] h-[41px] rounded-r-full bg-gradient-to-b from-[#f4f4f0] to-[#cfcfca] border border-[#c0c0ba] shadow flex items-center pl-[28px]">
      <div className="flex flex-col text-[10px] leading-[16px] w-[48px] text-[#553a10]">
        <div className="flex justify-between items-center">
          <svg width="7" height="8" viewBox="0 0 7 8"><path d="M3.500 0 7 4H5v4H2V4H0z" fill="#e0603a" /></svg>
          <span>0K/s</span>
        </div>
        <div className="flex justify-between items-center">
          <svg width="7" height="8" viewBox="0 0 7 8"><path d="M3.500 8 7 4H5V0H2v4H0z" fill="#2a9a50" /></svg>
          <span>0K/s</span>
        </div>
      </div>
      <div className="relative ml-[5px] w-[17px] h-[17px] rounded-full bg-[#3f80d0] border border-[#cfe0f5] text-white text-[14px] leading-[14px] text-center font-bold">
        +
        <div className="absolute left-[10px] top-[-6px] w-[8px] h-[8px] rounded-full bg-[#d82020]" />
      </div>
    </div>
    <div className="absolute left-[68px] top-[32px] w-[49px] h-[49px] rounded-full bg-gradient-to-b from-[#2a8a50] via-[#3eb070] to-[#149048] border-[2px] border-[#e8e8e8] shadow-[0_0_0_1px_#aaa] flex items-center justify-center text-white text-[14px]">
      <div className="absolute left-[11px] top-[2px] w-[23px] h-[6px] rounded-full bg-[#a8d8b8]/70" />
      76%
    </div>
  </>
);

export default function App() {
  return (
    <div className="relative w-[1366px] h-[768px] overflow-hidden flex flex-col bg-white [font-family:'Liberation_Sans','Noto_Sans_CJK_SC',sans-serif]">
      <TitleBar />
      <Toolbar />
      <AddressBar />
      <BookmarkBar />
      <Content />
      <HScroll />
      <StatusBar />
      <Taskbar />
      <FloatLogo />
      <SogouBar />
    </div>
  );
}
